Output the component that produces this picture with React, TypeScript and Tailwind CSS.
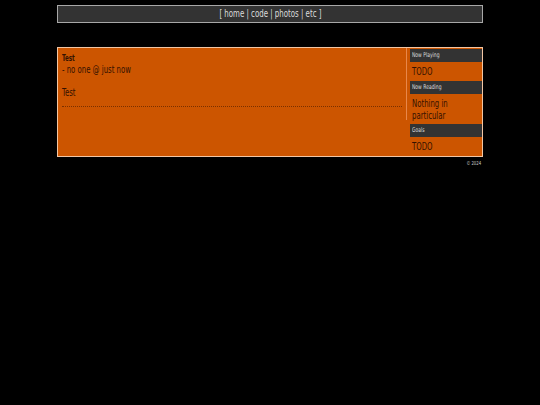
import React from "react";

type SideBox = {
  title: string;
  lines: string[];
  height: string;
};

// sidebar boxes, heights taken from the layout
const sideBoxes: SideBox[] = [
  { title: "Now Playing", lines: ["TODO"], height: "h-[19px] pt-[4px]" },
  { title: "Now Reading", lines: ["Nothing in", "particular"], height: "h-[30px] pt-[4px]" },
  { title: "Goals", lines: ["TODO"], height: "h-[19px] pt-[4px]" },
];

const navLinks = ["home", "code", "photos", "etc"];

export default function App() {
  return (
    <div className="min-h-[405px] bg-black font-['DejaVu_Sans_Condensed','DejaVu_Sans',sans-serif] text-[#331100]">
      <div className="mx-auto w-[426px] pt-[5px]">
        {/* nav */}
        <nav className="flex h-[18px] items-center justify-center border border-[#a8a8a8] bg-[#333333] text-[10px] leading-none text-[#dddddd]">
          <span className="inline-block scale-x-[0.78] whitespace-nowrap">
            [{" "}
            {navLinks.map((l, i) => (
              <React.Fragment key={l}>
                <a href="#" className="text-[#dddddd]">
                  {l}
                </a>
                {i < navLinks.length - 1 ? " | " : ""}
              </React.Fragment>
            ))}{" "}
            ]
          </span>
        </nav>

        {/* main box */}
        <div className="mt-[24px] flex h-[110px] border border-[#f2c6a4] bg-[#cc5500]">
          <div className="h-[72px] w-[349px] self-start border-r border-[#e8874a] px-[4px] pt-[6px]">
            <div className="origin-left scale-x-[0.77] whitespace-nowrap text-[8px] font-bold leading-[9px]">Test</div>
            <div className="mt-[1px] origin-left scale-x-[0.77] whitespace-nowrap text-[10px] leading-[12px]">
              - no one @ just now
            </div>
            <div className="mt-[11px] origin-left scale-x-[0.77] whitespace-nowrap text-[10px] leading-[12px]">Test</div>
            <div className="mt-[7px] border-b border-dotted border-[#7a3000]" />
          </div>

          <div className="ml-[3px] mt-[1px] w-[72px]">
            {sideBoxes.map((b) => (
              <div key={b.title}>
                <div className="flex h-[13px] items-center bg-[#333333] pl-[2px] text-[6.5px] leading-none text-[#dddddd]">
                  <span className="origin-left scale-x-[0.77] whitespace-nowrap">{b.title}</span>
                </div>
                <div className={`${b.height} px-[2px] text-[10px] leading-[12px]`}>
                  {b.lines.map((line) => (
                    <div key={line} className="origin-left scale-x-[0.77] whitespace-nowrap">
                      {line}
                    </div>
                  ))}
                </div>
              </div>
            ))}
          </div>
        </div>

        <div className="mt-[4px] pr-[2px] text-right text-[5.5px] leading-none text-[#cccccc]">
          <span className="inline-block origin-right scale-x-[0.77]">© 2024</span>
        </div>
      </div>
    </div>
  );
}
